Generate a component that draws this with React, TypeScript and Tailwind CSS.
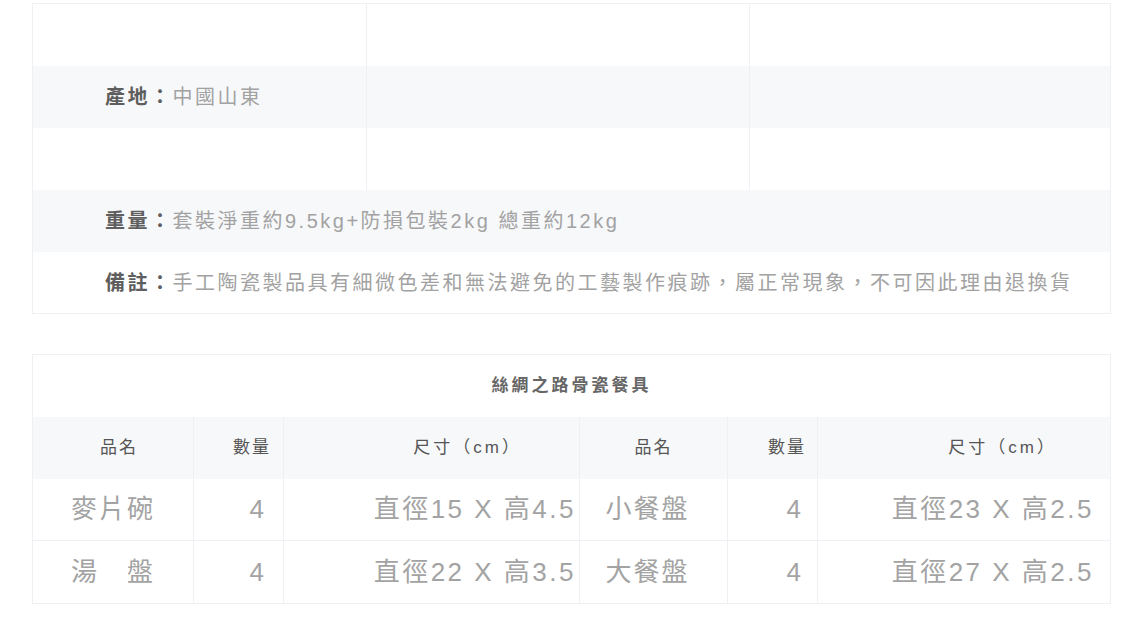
const infoTop = ['產地', '中國山東'];

const rows = [
  { a: '麥片碗', aq: '4', as: '直徑15 X 高4.5', b: '小餐盤', bq: '4', bs: '直徑23 X 高2.5' },
  { a: '湯　盤', aq: '4', as: '直徑22 X 高3.5', b: '大餐盤', bq: '4', bs: '直徑27 X 高2.5' },
];

function Label({ k, v }: { k: string; v: string }) {
  return (
    <p className="pl-[72px] text-[20px] tracking-[2.5px] leading-none whitespace-nowrap">
      <span className="font-semibold text-[#5e5e5e]">{k}：</span>
      <span className="text-[#a2a2a2]">{v}</span>
    </p>
  );
}

export default function App() {
  return (
    <div className="min-h-screen bg-white pt-[3px] pl-[32px] font-['Liberation_Sans','Noto_Sans_CJK_TC',sans-serif]">
      {/* spec table */}
      <div className="w-[1079px] border border-[#eef0f3]">
        <div className="grid grid-cols-[334px_383px_1fr] h-[62px]">
          <div className="border-r border-[#eef0f3]" />
          <div className="border-r border-[#eef0f3]" />
          <div />
        </div>
        <div className="grid grid-cols-[334px_383px_1fr] h-[62px] bg-[#f7f8fa]">
          <div className="flex items-center border-r border-[#eef0f3]">
            <Label k={infoTop[0]} v={infoTop[1]} />
          </div>
          <div className="border-r border-[#eef0f3]" />
          <div />
        </div>
        <div className="grid grid-cols-[334px_383px_1fr] h-[62px]">
          <div className="border-r border-[#eef0f3]" />
          <div className="border-r border-[#eef0f3]" />
          <div />
        </div>
        <div className="flex items-center h-[62px] bg-[#f7f8fa]">
          <Label k="重量" v="套裝淨重約9.5kg+防損包裝2kg 總重約12kg" />
        </div>
        <div className="flex items-center h-[61px]">
          <Label k="備註" v="手工陶瓷製品具有細微色差和無法避免的工藝製作痕跡，屬正常現象，不可因此理由退換貨" />
        </div>
      </div>

      {/* tableware table */}
      <div className="mt-[40px] w-[1079px] border border-[#eef0f3]">
        <div className="flex items-center justify-center h-[62px] text-[17px] tracking-[3px] font-semibold text-[#666]">
          絲綢之路骨瓷餐具
        </div>
        <div className="grid grid-cols-[161px_90px_296px_148px_90px_1fr] h-[62px] bg-[#f7f8fa] text-[17px] tracking-[2px] text-[#555]">
          <div className="flex items-center justify-center pl-[12px] border-r border-[#eef0f3]">品名</div>
          <div className="flex items-center justify-end pr-[12px] border-r border-[#eef0f3]">數量</div>
          <div className="flex items-center justify-end pr-[57px] tracking-[3px] border-r border-[#eef0f3]">尺寸（cm）</div>
          <div className="flex items-center justify-center border-r border-[#eef0f3]">品名</div>
          <div className="flex items-center justify-end pr-[11px] border-r border-[#eef0f3]">數量</div>
          <div className="flex items-center justify-end pr-[53px] tracking-[3px]">尺寸（cm）</div>
        </div>
        {rows.map((r, i) => (
          <div
            key={i}
            className={`grid grid-cols-[161px_90px_296px_148px_90px_1fr] h-[62px] text-[26px] tracking-[2px] text-[#a3a3a3] whitespace-nowrap ${i === 0 ? 'border-b border-[#eef0f3]' : ''}`}
          >
            <div className="flex items-center justify-center border-r border-[#eef0f3]">{r.a}</div>
            <div className="flex items-center justify-end pr-[17px] border-r border-[#eef0f3]">{r.aq}</div>
            <div className="flex items-center justify-end pr-[3px] tracking-[2.5px] border-r border-[#eef0f3]">{r.as}</div>
            <div className="flex items-center justify-center pr-[12px] border-r border-[#eef0f3]">{r.b}</div>
            <div className="flex items-center justify-end pr-[14px] border-r border-[#eef0f3]">{r.bq}</div>
            <div className="flex items-center justify-end pr-[16px] tracking-[2.5px]">{r.bs}</div>
          </div>
        ))}
      </div>
    </div>
  );
}
